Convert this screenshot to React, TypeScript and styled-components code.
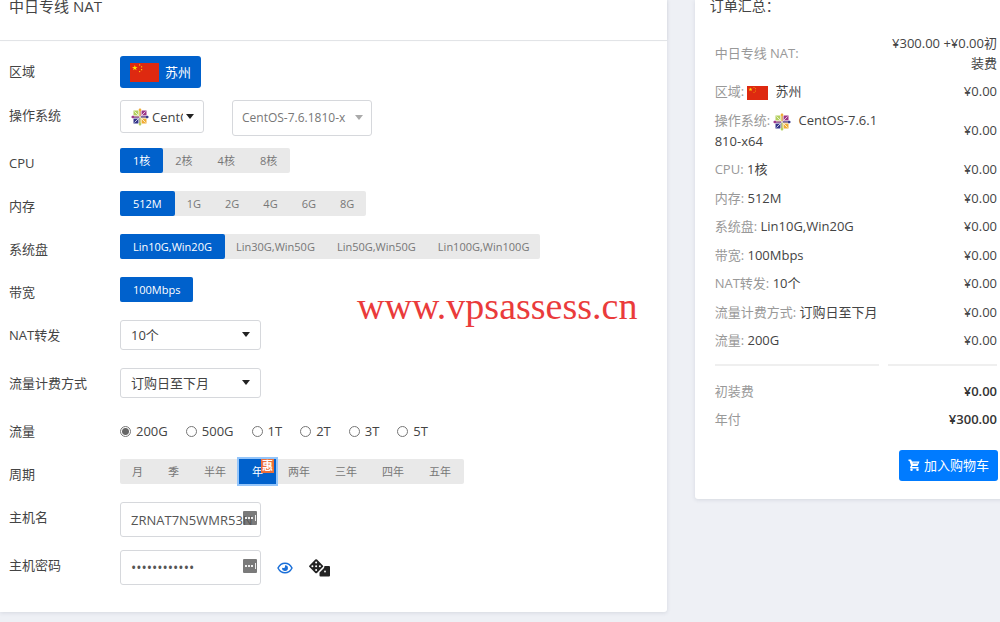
import React, { useState } from "react";
import styled, { createGlobalStyle, css } from "styled-components";

const GlobalStyle = createGlobalStyle`
  *, *::before, *::after { box-sizing: border-box; }
  body {
    margin: 0;
    background: #eef0f5;
    color: #444;
    font: 13px/20px "Open Sans", "Noto Sans CJK SC", sans-serif;
  }
  button, input, select { font: inherit; color: inherit; margin: 0; }
`;

const Page = styled.div`
  display: grid;
  grid-template-columns: minmax(0, 2fr) minmax(0, 1fr);
  align-items: start;
  column-gap: 28px;
  margin-right: -28px;
  min-height: 100vh;
  overflow: hidden;
`;

const Main = styled.main`
  position: relative;
  background: #fff;
  border-radius: 0 0 3px 0;
  box-shadow: 0 1px 4px rgba(40, 50, 80, 0.12);
`;

const Header = styled.header`
  padding: 0 9px 28px;
  border-bottom: 1px solid #e2e4e7;
  box-shadow: 0 -1px 3px rgba(0, 0, 0, 0.06);
`;

const Title = styled.h1`
  margin: 0;
  font-size: 15px;
  line-height: 12px;
  font-weight: 400;
`;

const Form = styled.form`
  padding: 15px 9px 14px;
`;

const Row = styled.div<{ $tall?: boolean }>`
  display: grid;
  grid-template-columns: 111px minmax(0, 1fr);
  align-items: start;
  min-height: ${(p) => (p.$tall ? 36 : 31)}px;
  margin-bottom: 12px;
`;

const Name = styled.label`
  line-height: 30px;
`;

const Controls = styled.div<{ $gap?: number; $middle?: boolean }>`
  display: flex;
  align-items: ${(p) => (p.$middle ? "center" : "flex-start")};
  gap: ${(p) => p.$gap ?? 0}px;
`;

const RegionButton = styled.button`
  display: flex;
  align-items: center;
  gap: 6px;
  height: 32px;
  padding: 0 10px;
  border: 0;
  border-radius: 3px;
  background: #0061cc;
  color: #fff;
`;

const OsButton = styled.button`
  display: flex;
  align-items: center;
  gap: 3px;
  width: 84px;
  height: 33px;
  padding: 0 9px 0 10px;
  border: 1px solid #d6d8dc;
  border-radius: 3px;
  background: #fff;

  &::after {
    content: "";
    border: 4px solid transparent;
    border-top: 5px solid #222;
    border-bottom: 0;
  }
`;

const OsName = styled.span`
  flex: 1;
  overflow: hidden;
  text-align: left;
  white-space: nowrap;
`;

const SelectBox = styled.div<{ $muted?: boolean }>`
  position: relative;
  width: ${(p) => (p.$muted ? 140 : 141)}px;

  &::after {
    content: "";
    position: absolute;
    right: ${(p) => (p.$muted ? 9 : 11)}px;
    top: 50%;
    margin-top: -3px;
    border: 4px solid transparent;
    border-top: 5px solid ${(p) => (p.$muted ? "#aaa" : "#222")};
    border-bottom: 0;
    pointer-events: none;
  }

  select {
    appearance: none;
    display: block;
    width: 100%;
    height: ${(p) => (p.$muted ? 36 : 30)}px;
    padding: 0 20px 0 ${(p) => (p.$muted ? 9 : 10)}px;
    border: 1px solid #d6d8dc;
    border-radius: 3px;
    background: #fff;
    font-size: ${(p) => (p.$muted ? 12 : 13)}px;
    color: ${(p) => (p.$muted ? "#777" : "#444")};
  }
`;

const Segments = styled.div`
  display: flex;
  height: 25px;
  border-radius: 2px;
  background: #e9e9e9;
`;

const Segment = styled.button<{ $on?: boolean; $ring?: boolean; $space: number }>`
  position: relative;
  padding: 0 ${(p) => Math.ceil(p.$space / 2)}px 0 ${(p) => Math.floor(p.$space / 2)}px;
  border: 0;
  border-radius: 2px;
  background: transparent;
  color: #777;
  font-size: 11px;
  line-height: 25px;
  white-space: nowrap;
  ${(p) =>
    p.$on &&
    css`
      padding: 0 13px;
      background: #0061cc;
      color: #fff;
    `}
  ${(p) =>
    p.$ring &&
    css`
      border-radius: 0;
      box-shadow: 0 0 0 2px #94c5fa;
    `}
`;

const Badge = styled.span`
  position: absolute;
  top: 0;
  right: 2px;
  width: 13px;
  height: 14px;
  background: #ec6f38;
  color: #fff;
  font-size: 11px;
  font-weight: 700;
  line-height: 14px;
`;

const RadioLabel = styled.label`
  display: flex;
  align-items: center;
  gap: 5px;
  line-height: 31px;

  input {
    appearance: none;
    width: 11px;
    height: 11px;
    border: 1px solid #767676;
    border-radius: 50%;
    background: #fff;
  }
  input:checked {
    background: radial-gradient(circle, #666 0 3px, #fff 4px);
  }
`;

const InputBox = styled.div`
  position: relative;
  width: 141px;

  input {
    display: block;
    width: 100%;
    height: 35px;
    padding: 0 4px 0 10px;
    border: 1px solid #d6d8dc;
    border-radius: 3px;
    background: #fff;
    color: #555;
  }
  input[type="password"] {
    font-size: 14px;
  }
  svg {
    position: absolute;
    right: 4px;
    top: 9px;
  }
`;

const IconButton = styled.button`
  display: flex;
  padding: 0;
  border: 0;
  background: none;
`;

const Watermark = styled.div`
  position: absolute;
  left: 357px;
  top: 284px;
  color: #ea3b3b;
  font: 38px/44px "Liberation Serif", serif;
  pointer-events: none;
`;

const Summary = styled.aside`
  padding: 0 30px 18px 15px;
  background: #fff;
  border-radius: 0 0 0 3px;
  box-shadow: 0 1px 4px rgba(40, 50, 80, 0.12);
`;

const SummaryTitle = styled.h2`
  margin: 0 0 17px;
  font-size: 14px;
  line-height: 12px;
  font-weight: 400;
`;

const Table = styled.table`
  width: calc(100% - 5px);
  margin-left: 5px;
  table-layout: fixed;
  border-collapse: collapse;

  th {
    width: 61%;
    padding: 4px 9px 4px 0;
    text-align: left;
    font-weight: 400;
    word-break: break-all;
    color: #999;
  }
  td {
    padding: 4px 1px 4px 0;
    text-align: right;
  }
  tbody tr:nth-child(even) > * {
    padding-bottom: 5px;
  }
  svg {
    vertical-align: middle;
  }
`;

const Value = styled.span<{ $spaced?: boolean }>`
  margin-left: ${(p) => (p.$spaced ? 7 : 0)}px;
  color: #444;
`;

const Total = styled.td`
  font-weight: 600;
  color: #333;
`;

const Rules = styled.div`
  display: grid;
  grid-template-columns: 3fr 2fr;
  gap: 9px;
  padding: 9px 1px 11px 5px;

  &::before,
  &::after {
    content: "";
    height: 2px;
    background: #efefef;
  }
`;

const Actions = styled.div`
  display: flex;
  justify-content: flex-end;
  margin-top: 16px;
`;

const CartButton = styled.button`
  display: flex;
  align-items: center;
  gap: 4px;
  height: 31px;
  padding: 0 9px;
  border: 0;
  border-radius: 3px;
  background: #007bff;
  color: #fff;
`;

const Flag = ({ width, height }: { width: number; height: number }) => (
  <svg width={width} height={height} viewBox="0 0 30 20" preserveAspectRatio="none" aria-hidden="true">
    <path fill="#de2910" d="M0 0h30v20H0z" />
    <g fill="#ffde00">
      <path d="M5 2l.7 2.1h2.2L6.1 5.4l.7 2.1L5 6.2 3.200 7.500l.7-2.100L2.100 4.100h2.200z" />
      <circle cx="10" cy="2" r=".7" />
      <circle cx="12" cy="4" r=".7" />
      <circle cx="12" cy="7" r=".7" />
      <circle cx="10" cy="9" r=".7" />
    </g>
  </svg>
);

const CentosLogo = ({ size }: { size: number }) => (
  <svg width={size} height={size} viewBox="0 0 36 36" aria-hidden="true">
    <path fill="#b3cf5e" d="M5 5h12v12H5z" />
    <path fill="#9c3587" d="M19 5h12v12H19z" />
    <path fill="#35368a" d="M5 19h12v12H5z" />
    <path fill="#f0ad35" d="M19 19h12v12H19z" />
    <path fill="#f0ad35" d="M18 0l4 5-3 1v11h-2V6l-3-1z" />
    <path fill="#35368a" d="M36 18l-5 4-1-3H19v-2h11l1-3z" />
    <path fill="#b3cf5e" d="M18 36l-4-5 3-1V19h2v11l3 1z" />
    <path fill="#9c3587" d="M0 18l5-4 1 3h11v2H6l-1 3z" />
    <path fill="none" stroke="#fff" strokeWidth="1.500" d="M7 7l10 10M29 7L19 17M7 29l10-10M29 29L19 19" />
    <path
      fill="none"
      stroke="#fff"
      strokeOpacity=".75"
      strokeWidth="1.500"
      d="M15 4v10M21 4v10M15 32V22M21 32V22M4 15h10M4 21h10M32 15H22M32 21H22"
    />
  </svg>
);

const KeyFill = () => (
  <svg width="14" height="14" viewBox="0 0 14 14" aria-hidden="true">
    <rect width="14" height="14" rx="1" fill="#555" fillOpacity=".78" />
    <path fill="#eee" d="M2 6h2v2H2zM5 6h2v2H5zM8 6h2v2H8zM12 4h1v6h-1z" />
  </svg>
);

const Eye = () => (
  <svg width="16" height="12" viewBox="0 0 16 12" fill="none" aria-hidden="true">
    <path
      stroke="#1a6fd8"
      strokeWidth="1.500"
      d="M1 6c1.500-3 4-4.800 7-4.800S13.500 3 15 6c-1.500 3-4 4.800-7 4.800S2.500 9 1 6z"
    />
    <path fill="#1a6fd8" d="M8 3.200A2.900 2.900 0 1 1 5.200 5.500c.3.400.7.600 1.200.600A1.500 1.500 0 0 0 8 4.500z" />
  </svg>
);

const Dice = () => (
  <svg width="21" height="18" viewBox="0 0 21 18" fill="#222" aria-hidden="true">
    <path d="M6.300.600a1.200 1.200 0 0 1 1.700 0l5.800 5.800a1.200 1.200 0 0 1 0 1.700L8 13.900a1.200 1.200 0 0 1-1.700 0L.5 8.100a1.200 1.200 0 0 1 0-1.700z" />
    <path d="M15.500 7H20a1 1 0 0 1 1 1v8.500a1 1 0 0 1-1 1h-8.500a1 1 0 0 1-1-1v-3L15 9z" />
    <g fill="#fff">
      <circle cx="7.150" cy="3.500" r="1" />
      <circle cx="7.150" cy="7.250" r="1" />
      <circle cx="7.150" cy="11" r="1" />
      <circle cx="3.400" cy="7.250" r="1" />
      <circle cx="10.900" cy="7.250" r="1" />
      <circle cx="16" cy="12.500" r=".9" />
    </g>
  </svg>
);

const Cart = () => (
  <svg width="12" height="12" viewBox="0 0 24 24" fill="#fff" aria-hidden="true">
    <path d="M1 1h5l2 4h15l-4 9H9l-1 2h13v3H5l-1-2 2-4L3 4H1z" />
    <circle cx="7" cy="21.500" r="2.500" />
    <circle cx="19" cy="21.500" r="2.500" />
    <path fill="#007bff" d="M9 7.500h10v1.500H10z" />
  </svg>
);

interface SegmentedProps {
  items: string[];
  space: number;
  initial?: number;
  sale?: boolean;
  label: string;
}

function Segmented({ items, space, initial = 0, sale, label }: SegmentedProps) {
  const [active, setActive] = useState(initial);
  return (
    <Segments role="group" aria-label={label}>
      {items.map((item, i) => (
        <Segment
          key={item}
          type="button"
          $space={space}
          $on={i === active}
          $ring={sale && i === active}
          aria-pressed={i === active}
          onClick={() => setActive(i)}
        >
          {item}
          {sale && i === initial && <Badge>惠</Badge>}
        </Segment>
      ))}
    </Segments>
  );
}

const segmentRows = [
  { name: "CPU", space: 25, items: ["1核", "2核", "4核", "8核"] },
  { name: "内存", space: 24, items: ["512M", "1G", "2G", "4G", "6G", "8G"] },
  { name: "系统盘", space: 22, items: ["Lin10G,Win20G", "Lin30G,Win50G", "Lin50G,Win50G", "Lin100G,Win100G"] },
  { name: "带宽", space: 24, items: ["100Mbps"] },
];

const traffic = ["200G", "500G", "1T", "2T", "3T", "5T"];
const periods = ["月", "季", "半年", "年", "两年", "三年", "四年", "五年"];

const details = [
  ["CPU", "1核"],
  ["内存", "512M"],
  ["系统盘", "Lin10G,Win20G"],
  ["带宽", "100Mbps"],
  ["NAT转发", "10个"],
  ["流量计费方式", "订购日至下月"],
  ["流量", "200G"],
];

export default function App() {
  const [shown, setShown] = useState(false);
  return (
    <>
      <GlobalStyle />
      <Page>
        <Main>
          <Header>
            <Title>中日专线 NAT</Title>
          </Header>
          <Form onSubmit={(e) => e.preventDefault()}>
            <Row>
              <Name as="span">区域</Name>
              <Controls>
                <RegionButton type="button">
                  <Flag width={29} height={19} />
                  苏州
                </RegionButton>
              </Controls>
            </Row>
            <Row $tall>
              <Name htmlFor="version">操作系统</Name>
              <Controls $gap={28}>
                <OsButton type="button">
                  <CentosLogo size={18} />
                  <OsName>CentOS</OsName>
                </OsButton>
                <SelectBox $muted>
                  <select id="version">
                    <option>CentOS-7.6.1810-x</option>
                  </select>
                </SelectBox>
              </Controls>
            </Row>
            {segmentRows.map((row) => (
              <Row key={row.name}>
                <Name as="span">{row.name}</Name>
                <Controls>
                  <Segmented label={row.name} items={row.items} space={row.space} />
                </Controls>
              </Row>
            ))}
            <Row $tall>
              <Name htmlFor="nat">NAT转发</Name>
              <SelectBox>
                <select id="nat">
                  <option>10个</option>
                </select>
              </SelectBox>
            </Row>
            <Row $tall>
              <Name htmlFor="billing">流量计费方式</Name>
              <SelectBox>
                <select id="billing">
                  <option>订购日至下月</option>
                </select>
              </SelectBox>
            </Row>
            <Row>
              <Name as="span">流量</Name>
              <Controls $gap={18}>
                {traffic.map((t, i) => (
                  <RadioLabel key={t}>
                    <input type="radio" name="traffic" defaultChecked={i === 0} />
                    {t}
                  </RadioLabel>
                ))}
              </Controls>
            </Row>
            <Row>
              <Name as="span">周期</Name>
              <Controls>
                <Segmented label="周期" items={periods} space={25} initial={3} sale />
              </Controls>
            </Row>
            <Row $tall>
              <Name htmlFor="host">主机名</Name>
              <InputBox>
                <input id="host" defaultValue="ZRNAT7N5WMR53N" />
                <KeyFill />
              </InputBox>
            </Row>
            <Row $tall>
              <Name htmlFor="password">主机密码</Name>
              <Controls $gap={16} $middle>
                <InputBox>
                  <input id="password" type={shown ? "text" : "password"} defaultValue="abcdefghijkl" />
                  <KeyFill />
                </InputBox>
                <IconButton type="button" aria-label="显示密码" onClick={() => setShown(!shown)}>
                  <Eye />
                </IconButton>
                <IconButton type="button" aria-label="随机密码">
                  <Dice />
                </IconButton>
              </Controls>
            </Row>
          </Form>
          <Watermark>www.vpsassess.cn</Watermark>
        </Main>

        <Summary>
          <SummaryTitle>订单汇总：</SummaryTitle>
          <Table>
            <tbody>
              <tr>
                <th scope="row">中日专线 NAT:</th>
                <td>¥300.00 +¥0.00初装费</td>
              </tr>
              <tr>
                <th scope="row">
                  区域: <Flag width={21} height={14} />
                  <Value $spaced>苏州</Value>
                </th>
                <td>¥0.00</td>
              </tr>
              <tr>
                <th scope="row">
                  操作系统: <CentosLogo size={18} />
                  <Value $spaced>CentOS-7.6.1810-x64</Value>
                </th>
                <td>¥0.00</td>
              </tr>
              {details.map(([name, value]) => (
                <tr key={name}>
                  <th scope="row">
                    {name}: <Value>{value}</Value>
                  </th>
                  <td>¥0.00</td>
                </tr>
              ))}
            </tbody>
          </Table>
          <Rules />
          <Table>
            <tbody>
              <tr>
                <th scope="row">初装费</th>
                <Total>¥0.00</Total>
              </tr>
              <tr>
                <th scope="row">年付</th>
                <Total>¥300.00</Total>
              </tr>
            </tbody>
          </Table>
          <Actions>
            <CartButton type="button">
              <Cart />
              加入购物车
            </CartButton>
          </Actions>
        </Summary>
      </Page>
    </>
  );
}
